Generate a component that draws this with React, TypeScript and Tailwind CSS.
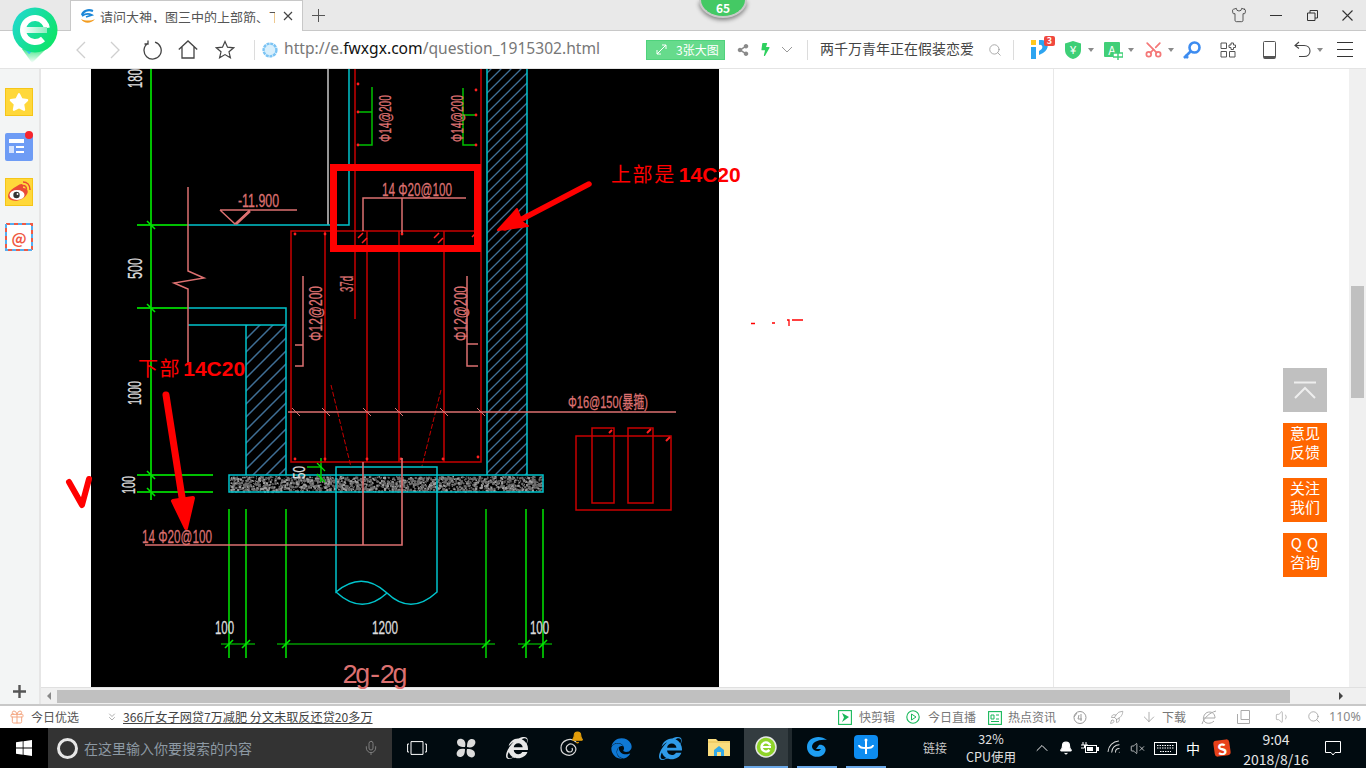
import React from "react";
import { Shirt, Rocket, Volume1, VolumeX, Bell, Scissors, Search, Mic, ChevronUp, Gift, ChevronsDown, ArrowDown, Wifi } from "lucide-react";
import { FaEdge, FaInternetExplorer, FaShareAlt, FaBolt, FaStar } from "react-icons/fa";

const GREEN = "#00c000";
const BRIGHT = "#00e600";
const CYAN = "#00c4cc";
const RED = "#c80000";
const PINK = "#dc7070";
const WHITE = "#dcdcdc";

function CadText({ x, y, w, size = 15, color = PINK, rotate, children }: { x: number; y: number; w: number; size?: number; color?: string; rotate?: boolean; children: React.ReactNode }) {
  return (
    <text
      x={x}
      y={y}
      fontSize={size}
      fill={color}
      stroke={color}
      strokeWidth={0.3}
      textLength={w}
      lengthAdjust="spacingAndGlyphs"
      transform={rotate ? `rotate(-90 ${x} ${y})` : undefined}
      fontFamily="'Liberation Sans','Noto Sans CJK SC',sans-serif"
    >
      {children}
    </text>
  );
}

function L({ p, c = RED, w = 1.5, dash }: { p: string; c?: string; w?: number; dash?: string }) {
  return <path d={p} stroke={c} strokeWidth={w} fill="none" strokeDasharray={dash} />;
}

const speckles: { x: number; y: number; w: number; c: string }[] = [];
let seed = 17;
for (let i = 0; i < 1800; i++) {
  seed = (seed * 1103515245 + 12345) & 0x7fffffff;
  const a = seed;
  seed = (seed * 1103515245 + 12345) & 0x7fffffff;
  const b = seed;
  speckles.push({ x: 230 + (a % 31200) / 100, y: 476 + (b % 1500) / 100, w: 1 + (a % 3) * 0.6, c: b % 3 === 0 ? "#a0a0a0" : "#6c6c6c" });
}

function Drawing() {
  const gTicks: [number, number, boolean][] = [
    [151, 225, true], [151, 308, true], [151, 475, true], [151, 492, true],
    [229, 644, false], [246, 644, false], [286, 644, false], [486, 644, false], [526, 644, false], [543, 644, false],
  ];
  return (
    <svg width="628" height="618" viewBox="91 69 628 618" className="block overflow-visible bg-black">
      <defs>
        <pattern id="h1" width="10" height="10" patternUnits="userSpaceOnUse">
          <path d="M-1 11 L11 -1 M-1 1 L1 -1 M9 11 L11 9" stroke="#3f6f96" strokeWidth="1.3" />
        </pattern>
        <pattern id="h2" width="13" height="13" patternUnits="userSpaceOnUse">
          <path d="M-1 14 L14 -1 M-1 1 L1 -1 M12 14 L14 12" stroke="#3f6f96" strokeWidth="1.5" />
        </pattern>
      </defs>

      {/* hatching */}
      <rect x="487" y="69" width="40" height="406" fill="url(#h1)" />
      <rect x="246" y="325" width="40" height="150" fill="url(#h2)" />

      {/* slab */}
      {speckles.map((s, i) => (
        <rect key={i} x={s.x} y={s.y} width={s.w} height={s.w} fill={s.c} />
      ))}
      <rect x="229" y="475" width="314" height="17" fill="none" stroke={CYAN} strokeWidth="1.5" />

      {/* green dim lines */}
      <L p="M151 69V500" c={GREEN} w={2} />
      <L p="M137 225H188M137 308H188M137 475H213M137 492H213" c={GREEN} w={1.8} />
      <L p="M229 509V658M246 509V658M286 509V658M526 509V658M543 509V658" c={GREEN} w={1.8} />
      <L p="M486 509V658" c={BRIGHT} w={1.4} />
      <L p="M221 644H255M277 644H495M518 644H552" c={BRIGHT} w={1.2} />
      {gTicks.map(([x, y, back], i) => (
        <L key={i} p={back ? `M${x - 4} ${y - 4}L${x + 4} ${y + 4}` : `M${x - 4} ${y + 4}L${x + 4} ${y - 4}`} c={BRIGHT} w={1.6} />
      ))}
      <L p="M321 458V482M307 467H321" c={GREEN} w={1.6} />
      <L p="M317 463L325 471M317 474L325 482" c={BRIGHT} w={1.2} />

      {/* green brackets */}
      <L p="M358 112H372M372 87V145H358" c={GREEN} />
      <L p="M476 115H463M463 88V145H476" c={GREEN} />

      {/* gray + cyan */}
      <L p="M328 69V225" c="#a8a8a8" w={1.8} />
      <L p="M188 225H349V69" c={CYAN} />
      <L p="M188 308H286V475M188 325H286M246 325V475" c={CYAN} />
      <L p="M487 69V475M527 69V475" c={CYAN} />
      <L p="M336 492V467H437V592Q411 616 387 593Q362 570 336 592V492M336 592Q362 616 387 593" c={CYAN} />

      {/* red rebar */}
      <L p="M355 69V319" c={RED} />
      <L p="M481 69V462H291V231H481" c={RED} />
      <L p="M325 231V462M367 231V462M399 231V462M444 231V462" c={RED} />
      <L p="M331 385L351 467M441 390L422 466" c={RED} w={1} dash="5 2" />
      {[[358, 84], [358, 112], [358, 145], [476, 90], [476, 115], [476, 145], [295, 234], [325, 234], [402, 234], [325, 459], [295, 459], [367, 459], [401, 459], [443, 459], [478, 457]].map(([x, y], i) => (
        <circle key={i} cx={x} cy={y} r="1.4" fill="#ff2020" />
      ))}
      <L p="M358 238L363 233M362 243L367 238M434 238L439 233M438 243L443 238M472 237L478 231" c="#ff2020" />

      {/* stirrups */}
      <L p="M576 436H671V510H576ZM592 428H614V503H592ZM628 428H653V503H628Z" c={RED} />
      <L p="M609 433L612 430M647 433L651 429M666 441L670 437" c="#ff2020" w={2} />

      {/* pink leaders */}
      <L p="M188 187V271L204 278L174 283L188 289V365" c={PINK} />
      <L p="M220 210H297M220 210L235 224L250 210" c={PINK} />
      <L p="M236 224L250 211" c={PINK} w={2.4} />
      <L p="M363 231V198H466M402 198V233" c={PINK} />
      <L p="M303 276V366H295M303 345H295" c={PINK} />
      <L p="M467 276V366H478M467 344H478" c={PINK} />
      <L p="M288 412H676" c={PINK} w={1.6} />
      <L p="M145 545H402V458M363 462V545" c={PINK} w={1.6} />
      {[296, 326, 367, 399, 444, 481].map((x) => (
        <L key={x} p={`M${x - 4} ${408}L${x + 4} ${416}`} c={PINK} w={1} />
      ))}

      {/* CAD notes */}
      <CadText x={142} y={88} w={19} size={20} color={WHITE} rotate>180</CadText>
      <CadText x={142} y={279} w={21} size={20} color={WHITE} rotate>500</CadText>
      <CadText x={141} y={405} w={24} size={18} color={WHITE} rotate>1000</CadText>
      <CadText x={135} y={494} w={18} size={19} color={WHITE} rotate>100</CadText>
      <CadText x={305} y={479} w={13} size={17} color={WHITE} rotate>50</CadText>
      <CadText x={238} y={207} w={41} size={19}>-11.900</CadText>
      <CadText x={391} y={142} w={47} size={17} rotate>Φ14@200</CadText>
      <CadText x={463} y={142} w={47} size={17} rotate>Φ14@200</CadText>
      <CadText x={322} y={341} w={55} size={19} rotate>Φ12@200</CadText>
      <CadText x={467} y={341} w={55} size={19} rotate>Φ12@200</CadText>
      <CadText x={353} y={292} w={16} size={18} rotate>37d</CadText>
      <CadText x={382} y={196} w={70} size={19}>14 Φ20@100</CadText>
      <CadText x={142} y={543} w={70} size={19}>14 Φ20@100</CadText>
      <CadText x={568} y={408} w={80} size={17}>Φ16@150(暴箍)</CadText>
      <CadText x={215} y={634} w={19} size={18} color={WHITE}>100</CadText>
      <CadText x={372} y={634} w={26} size={18} color={WHITE}>1200</CadText>
      <CadText x={530} y={634} w={19} size={18} color={WHITE}>100</CadText>
      <text x={342} y={683} fontSize={27} fill={PINK} textLength={66} lengthAdjust="spacing" fontFamily="'Liberation Mono',monospace">2g-2g</text>

      {/* highlight box */}
      <rect x="333.5" y="167.5" width="144" height="81" fill="none" stroke="#ff0000" strokeWidth="7" />

      {/* hand-drawn arrows */}
      <path d="M589 184L505 228" stroke="#ff0000" strokeWidth="5.5" strokeLinecap="round" />
      <path d="M498 230L517 209L522 222L528 226Z" fill="#ff0000" stroke="#ff0000" strokeWidth="2" strokeLinejoin="round" />
      <path d="M166 395L184 510" stroke="#ff0000" strokeWidth="7" strokeLinecap="round" />
      <path d="M186 528L173 501L193 498Z" fill="#ff0000" stroke="#ff0000" strokeWidth="4" strokeLinejoin="round" />
      <path d="M69 482L82 505L89 479" stroke="#ff0000" strokeWidth="6" strokeLinecap="round" strokeLinejoin="round" fill="none" />

      {/* clipped marks in the page text */}
      <path d="M751 323.5H755M772 323H775M787 320H789V326M792 320H803" stroke="#ff0000" strokeWidth="1.3" fill="none" />
    </svg>
  );
}

function Logo() {
  return (
    <svg width="50" height="60" viewBox="0 0 50 60" className="absolute left-[10px] top-[5px] z-10">
      <defs>
        <linearGradient id="lg" x1="0" y1="0" x2="1" y2="0.6">
          <stop offset="0" stopColor="#22d8d8" />
          <stop offset="1" stopColor="#0ee46a" />
        </linearGradient>
        <linearGradient id="lt" x1="0" y1="0" x2="0" y2="1">
          <stop offset="0" stopColor="#2be37a" />
          <stop offset="1" stopColor="#ffffff" />
        </linearGradient>
        <linearGradient id="lb" x1="0" y1="0" x2="1" y2="0">
          <stop offset="0" stopColor="#ffffff" />
          <stop offset="1" stopColor="#8cebc0" />
        </linearGradient>
      </defs>
      <path d="M12 44L22 58L38 42Z" fill="url(#lt)" />
      <path d="M9 38L19 49L25 44Z" fill="#38bdf8" />
      <circle cx="25" cy="25" r="22.5" fill="url(#lg)" />
      <circle cx="25" cy="25" r="12" fill="none" stroke="#fff" strokeWidth="6" strokeDasharray="63 12.4" transform="rotate(48 25 25)" />
      <rect x="13" y="22" width="24" height="6" fill="url(#lb)" />
    </svg>
  );
}

function Favicon() {
  return (
    <svg width="16" height="15" viewBox="0 0 16 15">
      <path d="M2 6C3 2 8 0 13 2" stroke="#1c87d8" strokeWidth="2.2" fill="none" />
      <path d="M2 7C6 4 10 5 12 6L6 8" stroke="#1c87d8" strokeWidth="1.6" fill="none" />
      <path d="M1 10C4 15 11 15 15 10C11 12 5 12 1 10Z" fill="#f39c1f" />
    </svg>
  );
}

function Arrow() {
  return <div className="h-0 w-0 border-x-[3.5px] border-t-[4px] border-x-transparent border-t-[#8a8a8a]" />;
}

function Toolbar() {
  return (
    <div className="flex h-[38px] items-center border-b border-[#e4e4e4] bg-white pl-[64px]">
      <div className="flex w-[34px] justify-center">
        <svg width="12" height="18" viewBox="0 0 12 18"><path d="M10 1L2 9L10 17" stroke="#cfcfcf" strokeWidth="1.3" fill="none" /></svg>
      </div>
      <div className="flex w-[34px] justify-center">
        <svg width="12" height="18" viewBox="0 0 12 18"><path d="M2 1L10 9L2 17" stroke="#cfcfcf" strokeWidth="1.3" fill="none" /></svg>
      </div>
      <div className="flex w-[40px] justify-center">
        <svg width="20" height="20" viewBox="0 0 20 20"><path d="M6 3.2A8.6 8.6 0 1 0 13 2.2M6 0.5V4H2.5" stroke="#444" strokeWidth="1.3" fill="none" /></svg>
      </div>
      <div className="flex w-[32px] justify-center">
        <svg width="20" height="19" viewBox="0 0 20 19"><path d="M0.8 9.5L10 1L19.2 9.5M4 7V18H16V7" stroke="#444" strokeWidth="1.3" fill="none" /></svg>
      </div>
      <div className="flex w-[42px] justify-center">
        <svg width="20" height="19" viewBox="0 0 20 19"><path d="M10 1.5L12.5 7.2L18.6 7.8L14 11.8L15.4 17.8L10 14.6L4.6 17.8L6 11.8L1.4 7.8L7.5 7.2Z" stroke="#444" strokeWidth="1.2" fill="none" /></svg>
      </div>
      <div className="ml-[8px] h-[20px] w-px bg-[#dcdcdc]" />
      <div className="flex w-[29px] justify-center">
        <svg width="16" height="16" viewBox="0 0 16 16">
          <circle cx="8" cy="8" r="6.4" fill="#d8effc" stroke="#7cc4f4" strokeWidth="2.4" strokeDasharray="3 0.7" />
        </svg>
      </div>
      <div className="mb-[2px] w-[362px] whitespace-nowrap font-['Noto_Sans','Liberation_Sans',sans-serif] text-[15.6px] leading-none text-[#777]">
        http://e.<span className="text-[#111]">fwxgx.com</span>/question_1915302.html
      </div>
      <div className="flex h-[20px] w-[79px] items-center gap-[9px] border border-[#4fd27c] bg-[#66db8c] pl-[9px] text-[12px] text-white">
        <svg width="11" height="11" viewBox="0 0 11 11"><path d="M1 10L10 1M6 1H10V5M1 6V10H5" stroke="#fff" strokeWidth="1" fill="none" /></svg>
        <span>3张大图</span>
      </div>
      <div className="ml-[8px] flex w-[20px] justify-center"><FaShareAlt size={12} color="#8a8a8a" /></div>
      <div className="ml-[2px] flex w-[20px] justify-center"><FaBolt size={13} color="#2fd05f" /></div>
      <div className="ml-[2px] flex w-[20px] justify-center">
        <svg width="12" height="7" viewBox="0 0 12 7"><path d="M1 1L6 6L11 1" stroke="#999" strokeWidth="1" fill="none" /></svg>
      </div>
      <div className="ml-[10px] h-[20px] w-px bg-[#dcdcdc]" />
      <div className="mb-[3px] ml-[12px] w-[165px] whitespace-nowrap text-[14px] leading-none text-[#444]">两千万青年正在假装恋爱</div>
      <div className="flex w-[20px] justify-center"><Search size={14} color="#999" strokeWidth={1.4} /></div>
      <div className="ml-[8px] h-[20px] w-px bg-[#dcdcdc]" />
      <div className="relative ml-[14px] flex h-[24px] w-[24px] justify-center">
        <svg width="24" height="24" viewBox="0 0 24 24">
          <rect x="3" y="2" width="5" height="5" fill="#ffc81e" />
          <rect x="3" y="9" width="5" height="12" fill="#2da4f0" />
          <path d="M11 2H14C21 2 22 11 15 15L11 17V13C16 11 15 6 11 7Z" fill="#2da4f0" />
        </svg>
        <span className="absolute right-[-3px] top-[-2px] rounded-[2px] bg-[#f0483e] px-[3px] text-[9px] font-bold leading-[10px] text-white">3</span>
      </div>
      <div className="ml-[10px] flex w-[22px] justify-center">
        <svg width="18" height="20" viewBox="0 0 18 20">
          <path d="M9 1L17 3.5V10C17 15 13 18 9 19C5 18 1 15 1 10V3.5Z" fill="#3dcf76" />
          <text x="9" y="14" fontSize="11" textAnchor="middle" fill="#fff" fontFamily="'Liberation Sans',sans-serif">¥</text>
        </svg>
      </div>
      <div className="ml-[3px] flex w-[7px] justify-center"><Arrow /></div>
      <div className="relative ml-[7px] flex h-[20px] w-[24px] items-center pl-[3px]">
        <div className="flex h-[15px] w-[16px] items-center justify-center rounded-[1px] bg-[#41cf78] text-[12px] leading-none text-white">A</div>
        <svg width="10" height="10" viewBox="0 0 10 10" className="absolute bottom-0 right-[2px]"><path d="M0 3H10V7H0ZM5 0V10" stroke="#41cf78" strokeWidth="1.5" fill="#fff" /></svg>
      </div>
      <div className="ml-[2px] flex w-[7px] justify-center"><Arrow /></div>
      <div className="ml-[7px] flex w-[24px] justify-center"><Scissors size={19} color="#f47878" strokeWidth={2.2} className="-rotate-90" /></div>
      <div className="ml-[2px] flex w-[7px] justify-center"><Arrow /></div>
      <div className="ml-[6px] flex w-[24px] justify-center">
        <svg width="20" height="20" viewBox="0 0 20 20"><circle cx="12.5" cy="7.5" r="5" stroke="#3d8cf0" strokeWidth="2.6" fill="none" /><path d="M8.5 11.5L2 18M3 15L6 18" stroke="#3d8cf0" strokeWidth="2.6" fill="none" /></svg>
      </div>
      <div className="ml-[12px] flex w-[24px] justify-center">
        <svg width="16" height="16" viewBox="0 0 16 16"><path d="M1 1H6.5V6.5H1ZM1 9.5H6.5V15H1ZM9.5 9.5H15V15H9.5ZM11 1H13.5V3H15.5V5.5H13.5V7.5H11V5.5H9V3H11Z" stroke="#555" strokeWidth="1" fill="none" /></svg>
      </div>
      <div className="ml-[17px] flex w-[24px] justify-center">
        <svg width="13" height="18" viewBox="0 0 13 18"><rect x="0.5" y="0.5" width="12" height="17" rx="1" stroke="#555" strokeWidth="1" fill="none" /><rect x="1" y="15" width="11" height="2.5" fill="#555" /></svg>
      </div>
      <div className="ml-[9px] flex w-[24px] justify-center">
        <svg width="17" height="17" viewBox="0 0 17 17"><path d="M5 1L1 4.5L5 7.5M1 4.5H10C18 4.5 18 15.5 10 15.5H5" stroke="#444" strokeWidth="1.1" fill="none" /></svg>
      </div>
      <div className="ml-[2px] flex w-[7px] justify-center"><Arrow /></div>
      <div className="ml-[10px] flex w-[24px] flex-col items-center gap-[6px]">
        <div className="h-px w-[16px] bg-[#333]" />
        <div className="h-px w-[16px] bg-[#333]" />
        <div className="h-px w-[16px] bg-[#333]" />
      </div>
    </div>
  );
}

function TitleStrip() {
  return (
    <div className="relative flex h-[31px] border-b border-[#c8c8c8] bg-[#e9e9e9] pl-[70px]">
      <div className="flex h-[31px] w-[233px] items-center border-x border-t border-[#c8c8c8] bg-white pl-[9px]">
        <Favicon />
        <div className="ml-[4px] w-[175px] overflow-hidden whitespace-nowrap text-[13px] leading-none text-[#555]">请问大神，图三中的上部筋、下</div>
        <svg width="10" height="10" viewBox="0 0 10 10" className="ml-[8px]"><path d="M1 1L9 9M9 1L1 9" stroke="#444" strokeWidth="1.2" /></svg>
      </div>
      <div className="flex w-[30px] items-center justify-center">
        <svg width="13" height="13" viewBox="0 0 13 13"><path d="M6.5 0V13M0 6.5H13" stroke="#555" strokeWidth="1" /></svg>
      </div>
      <div className="flex-1" />
      <div className="flex w-[37px] items-center justify-center"><Shirt size={16} color="#333" strokeWidth={1.2} /></div>
      <div className="flex w-[37px] items-center justify-center"><div className="h-px w-[12px] bg-[#333]" /></div>
      <div className="flex w-[36px] items-center justify-center">
        <svg width="11" height="11" viewBox="0 0 11 11"><path d="M0.5 3H8V10.5H0.5ZM3 3V0.5H10.5V8H8" stroke="#333" strokeWidth="1" fill="none" /></svg>
      </div>
      <div className="flex w-[36px] items-center justify-center pr-[2px]">
        <svg width="11" height="11" viewBox="0 0 11 11"><path d="M0.5 0.5L10.5 10.5M10.5 0.5L0.5 10.5" stroke="#333" strokeWidth="1.1" /></svg>
      </div>
      <div className="absolute left-[699px] top-0 flex h-[18px] w-[48px] items-end justify-center rounded-bl-[24px_18px] rounded-br-[24px_18px] border-x-2 border-b-2 border-[#c9c9c9] bg-[#44c964] pb-[1px] text-[12px] font-bold leading-[14px] text-white shadow-[0_2px_4px_rgba(0,0,0,0.45)]">65</div>
    </div>
  );
}

function Sidebar() {
  return (
    <div className="flex w-[41px] flex-col justify-between border-r-2 border-[#e6e6e6] bg-[#f3f5f5] pt-[19px]">
      <div className="flex flex-col items-center gap-[17px] pr-[1px]">
        <div className="flex h-[28px] w-[28px] items-center justify-center border border-[#f5c518] bg-[#ffd83a]"><FaStar size={20} color="#fff" /></div>
        <div className="relative h-[28px] w-[28px] rounded-[2px] bg-[#6e9cf5]">
          <div className="absolute left-[4px] top-[6px] h-[4px] w-[15px] bg-white" />
          <div className="absolute left-[4px] top-[13px] h-[7px] w-[5px] bg-[#d4e2fd]" />
          <div className="absolute left-[11px] top-[13px] h-[2px] w-[8px] bg-white" />
          <div className="absolute left-[11px] top-[18px] h-[2px] w-[8px] bg-white" />
          <div className="absolute right-0 top-[-2px] h-[8px] w-[8px] rounded-full bg-[#f8242c]" />
        </div>
        <div className="flex h-[28px] w-[28px] items-center justify-center border border-[#f5c518] bg-[#ffd83a]">
          <svg width="26" height="24" viewBox="0 0 26 24">
            <path d="M11 6C15 3 18 3 17 8C21 8 23 11 21 14C18 20 10 22 5 20C0 18 1 11 11 6Z" fill="#ea4b35" />
            <ellipse cx="11" cy="15" rx="7.5" ry="5" fill="#fff" />
            <circle cx="10.5" cy="15" r="3.2" fill="#333" />
            <circle cx="11.5" cy="14" r="0.9" fill="#fff" />
            <path d="M17 2C21 2 24 5 24 10M17 5.5C19 5.5 20.5 7 20.5 9.5" stroke="#ea4b35" strokeWidth="1.5" fill="none" />
          </svg>
        </div>
        <div className="relative flex h-[28px] w-[28px] items-center justify-center bg-white text-[15px] font-bold leading-none text-[#ef5a45]">
          <svg width="28" height="28" viewBox="0 0 28 28" className="absolute inset-0">
            <rect x="1" y="1" width="26" height="26" fill="none" stroke="#ef5a45" strokeWidth="2" strokeDasharray="4 4" />
            <rect x="1" y="1" width="26" height="26" fill="none" stroke="#54aef0" strokeWidth="2" strokeDasharray="4 4" strokeDashoffset="4" />
          </svg>
          <span className="relative">@</span>
        </div>
      </div>
      <div className="flex h-[26px] items-center justify-center">
        <svg width="13" height="13" viewBox="0 0 13 13"><path d="M6.5 0V13M0 6.5H13" stroke="#555" strokeWidth="2.4" /></svg>
      </div>
    </div>
  );
}

function FloatBtn({ children }: { children: React.ReactNode }) {
  return <div className="flex h-[44px] w-[44px] flex-col items-center justify-center bg-[#ff6600] pb-[6px] text-[15px] leading-[19px] text-white">{children}</div>;
}

function Page() {
  return (
    <div className="flex h-[618px]">
      <div className="relative flex-1 bg-white">
        <div className="h-full w-[1013px] border-r border-[#e8e8e8] pl-[50px]">
          <Drawing />
        </div>
        <div className="absolute left-[570px] top-[95px] flex items-baseline whitespace-nowrap font-bold leading-none text-[#ff0000]">
          <span className="mr-[3px] font-normal text-[20px] tracking-[1.6px]">上部是</span>
          <span className="font-['Liberation_Sans',sans-serif] text-[21px]">14C20</span>
        </div>
        <div className="absolute left-[97px] top-[289px] flex items-baseline whitespace-nowrap font-bold leading-none text-[#ff0000]">
          <span className="mr-[2px] font-normal text-[20px] tracking-[1.6px]">下部</span>
          <span className="font-['Liberation_Sans',sans-serif] text-[21px]">14C20</span>
        </div>
        <div className="absolute left-[1242px] top-[299px] flex flex-col gap-[11px]">
          <div className="flex h-[44px] w-[44px] items-center justify-center bg-[#c0c0c0]">
            <svg width="24" height="18" viewBox="0 0 24 18"><path d="M1 1.5H23M2 17L12 7L22 17" stroke="#eee" strokeWidth="2" fill="none" /></svg>
          </div>
          <FloatBtn><span>意见</span><span>反馈</span></FloatBtn>
          <FloatBtn><span>关注</span><span>我们</span></FloatBtn>
          <FloatBtn><span className="pl-[4px] text-[15px] tracking-[5px]">QQ</span><span>咨询</span></FloatBtn>
        </div>
      </div>
      <div className="w-[17px] bg-[#f0f0f0] pl-[2px] pt-[217px]">
        <div className="h-[112px] w-[13px] bg-[#c0c0c0]" />
      </div>
    </div>
  );
}

function HScroll() {
  return (
    <div className="flex h-[17px] items-center border-t border-[#e0e0e0] bg-[#f0f0f0]">
      <div className="flex w-[16px] justify-center">
        <div className="h-0 w-0 border-y-[4px] border-r-[4px] border-y-transparent border-r-[#888]" />
      </div>
      <div className="h-[13px] w-[1233px] bg-[#c0c0c0]" />
      <div className="ml-[49px] h-0 w-0 border-y-[4px] border-l-[4px] border-y-transparent border-l-[#444]" />
    </div>
  );
}

function StatusBar() {
  return (
    <div className="flex h-[24px] items-center border-t-2 border-[#c8c8c8] bg-white text-[12px] leading-none text-[#777]">
      <div className="ml-[8px] flex w-[18px] justify-center"><Gift size={16} color="#f4a681" strokeWidth={1.5} /></div>
      <span className="ml-[5px] w-[48px] whitespace-nowrap text-[#555]">今日优选</span>
      <div className="ml-[25px] flex w-[16px] justify-center"><ChevronsDown size={12} color="#777" strokeWidth={1.2} /></div>
      <span className="ml-[3px] w-[250px] whitespace-nowrap text-[12.15px] text-[#444] underline">366斤女子网贷7万减肥 分文未取反还贷20多万</span>
      <div className="flex-1" />
      <div className="flex w-[528px] items-center">
        <svg width="14" height="15" viewBox="0 0 14 15" className="w-[14px]"><rect x="0.6" y="0.6" width="12.8" height="13.8" fill="none" stroke="#18b85a" strokeWidth="1.1" /><path d="M4 3L11 7L4 12L6 7.5Z" fill="#18b85a" /></svg>
        <span className="ml-[7px] w-[36px] whitespace-nowrap">快剪辑</span>
        <svg width="14" height="14" viewBox="0 0 14 14" className="ml-[11px] w-[14px]"><circle cx="7" cy="7" r="6.2" fill="none" stroke="#18b85a" strokeWidth="1.1" /><path d="M5.5 4L10 7L5.5 10Z" fill="none" stroke="#18b85a" /></svg>
        <span className="ml-[8px] w-[48px] whitespace-nowrap">今日直播</span>
        <svg width="14" height="15" viewBox="0 0 14 15" className="ml-[12px] w-[14px]"><rect x="0.6" y="1.6" width="12.8" height="12.8" fill="none" stroke="#18b85a" strokeWidth="1.1" /><path d="M3 5H6V9H3ZM8 5H11M8 9H11M3 11.5H11" stroke="#18b85a" fill="none" /></svg>
        <span className="ml-[6px] w-[48px] whitespace-nowrap">热点资讯</span>
        <svg width="16" height="15" viewBox="0 0 16 15" className="ml-[16px] w-[16px]"><circle cx="8" cy="7.5" r="6" fill="none" stroke="#999" /><path d="M2 7L5 3M7 5L6 9H10M9 4V11" stroke="#999" fill="none" /></svg>
        <div className="ml-[21px] w-[16px]"><Rocket size={15} color="#999" strokeWidth={1.2} /></div>
        <div className="ml-[16px] w-[16px]"><ArrowDown size={16} color="#999" strokeWidth={1.2} /></div>
        <span className="ml-[5px] w-[24px] whitespace-nowrap">下载</span>
        <svg width="16" height="15" viewBox="0 0 16 15" className="ml-[15px] w-[16px]"><path d="M2 8H14C14 3 10 1 6 2.5C3 4 1.5 8 3 11C5 14 10 14 13 11M1 14C3 8 8 3 15 1" stroke="#aaa" fill="none" /></svg>
        <svg width="16" height="14" viewBox="0 0 16 14" className="ml-[20px] w-[16px]"><path d="M4 0.5H12.5V9.5M0.5 4V13.5H12.5V9.5H4V0.5" stroke="#aaa" fill="none" /></svg>
        <div className="ml-[22px] w-[16px]"><Volume1 size={16} color="#aaa" strokeWidth={1.2} /></div>
        <div className="ml-[16px] w-[16px]"><Search size={14} color="#999" strokeWidth={1.3} /></div>
        <span className="ml-[6px] whitespace-nowrap font-['Noto_Sans',sans-serif] text-[12.5px] text-[#888]">110%</span>
      </div>
    </div>
  );
}

function Slot({ className, children }: { className: string; children: React.ReactNode }) {
  return <div className={`flex h-full items-center justify-center ${className}`}>{children}</div>;
}

function Taskbar() {
  return (
    <div className="flex h-[40px] bg-[#010b10] text-white">
      <Slot className="w-[48px] bg-black">
        <svg width="16" height="16" viewBox="0 0 16 16"><path d="M0 2.3L6.7 1.3V7.6H0ZM7.5 1.2L16 0V7.6H7.5ZM0 8.4H6.7V14.7L0 13.7ZM7.5 8.4H16V16L7.5 14.8Z" fill="#fff" /></svg>
      </Slot>
      <div className="flex h-full w-[344px] items-center bg-[#333333] pl-[9px] pr-[13px]">
        <div className="h-[21px] w-[21px] rounded-full border-[3px] border-[#e6e6e6]" />
        <span className="ml-[6px] whitespace-nowrap text-[14px] leading-none text-[#8d99a3]">在这里输入你要搜索的内容</span>
        <div className="ml-auto"><Mic size={16} color="#888" strokeWidth={1.3} /></div>
      </div>
      <Slot className="w-[49px]">
        <svg width="20" height="14" viewBox="0 0 20 14"><path d="M4 0.6H16V13.4H4ZM2 3H0.6V11H2M18 3H19.4V11H18" stroke="#fff" fill="none" /></svg>
      </Slot>
      <Slot className="w-[50px]">
        <svg width="20" height="20" viewBox="0 0 20 20" fill="#dcdcdc"><path d="M9 9C3 9 1 7 1 4C1 1 4 0 6 1C9 2 10 5 9 9ZM11 9C11 3 13 1 16 1C19 1 20 4 19 6C18 9 15 10 11 9ZM11 11C17 11 19 13 19 16C19 19 16 20 14 19C11 18 10 15 11 11ZM9 11C9 17 7 19 4 19C1 19 0 16 1 14C2 11 5 10 9 11Z" /></svg>
      </Slot>
      <Slot className="w-[52px]"><FaInternetExplorer size={22} color="#e8e8e8" /></Slot>
      <Slot className="relative w-[51px]">
        <svg width="20" height="20" viewBox="0 0 20 20"><path d="M17 4C12 -1 2 2 2 10C2 17 12 20 16 14C19 9 13 4 9 7C6 9 7 14 11 14C13 14 14 12 13 10" stroke="#d8d8d8" strokeWidth="1.2" fill="none" /></svg>
        <Bell size={13} color="#e09c0a" fill="#e09c0a" className="absolute left-[28px] top-[3px]" />
      </Slot>
      <Slot className="ml-[2px] w-[50px]"><FaEdge size={21} color="#0f78d4" /></Slot>
      <Slot className="w-[48px]"><FaInternetExplorer size={23} color="#2f9be8" /></Slot>
      <Slot className="w-[50px]">
        <svg width="22" height="20" viewBox="0 0 22 20"><path d="M0 1H8L10 3H22V18H0Z" fill="#fbdd7e" /><path d="M0 4H22" stroke="#e8bf52" /><path d="M6 18V12L11 8L16 12V18Z" fill="#33a9e8" /><rect x="9" y="14" width="4" height="4" fill="#fbdd7e" /></svg>
      </Slot>
      <Slot className="w-[44px] border-b-2 border-[#6aa8e8] bg-[#333c40]">
        <svg width="22" height="24" viewBox="0 0 22 24">
          <circle cx="11" cy="12" r="10" fill="#8fd32a" stroke="#e6e6e6" strokeWidth="1.5" />
          <circle cx="11" cy="12" r="4.5" fill="none" stroke="#fff" strokeWidth="2.4" strokeDasharray="23 5.3" transform="rotate(40 11 12)" />
          <path d="M6 12H16" stroke="#fff" strokeWidth="2" />
        </svg>
      </Slot>
      <div className="h-full w-[9px]"><div className="h-full w-[4px] bg-[#20292d]" /></div>
      <Slot className="w-[40px] border-b-2 border-[#6aa8e8]">
        <svg width="24" height="24" viewBox="0 0 24 24"><path d="M22 5C15 -1 2 2 2 12C2 21 13 25 19 19C23 14 19 9 14 10L11 14H16C15 17 8 17 7 12C7 7 14 4 22 5Z" fill="#1e9ef2" /></svg>
      </Slot>
      <div className="w-[9px]" />
      <Slot className="w-[40px] border-b-2 border-[#6aa8e8]">
        <svg width="24" height="24" viewBox="0 0 24 24"><rect width="24" height="24" rx="4" fill="#0d8cf0" /><path d="M12 5V19M5 10C5 13 8 13 12 13C16 13 19 13 19 10" stroke="#fff" strokeWidth="2" fill="none" /><circle cx="12" cy="5" r="1.5" fill="#fff" /></svg>
      </Slot>
      <span className="ml-[37px] flex w-[24px] items-center whitespace-nowrap text-[12px] leading-none text-[#c8c8c8]">链接</span>
      <div className="ml-[14px] flex w-[60px] flex-col items-center justify-center text-[12.5px] leading-[18px] text-[#e0e0e0]">
        <span>32%</span>
        <span className="whitespace-nowrap">CPU使用</span>
      </div>
      <Slot className="ml-[11px] w-[20px]"><ChevronUp size={20} color="#eee" strokeWidth={1.2} /></Slot>
      <Slot className="ml-[6px] w-[16px]"><Bell size={14} color="#fff" fill="#fff" /></Slot>
      <Slot className="ml-[6px] w-[20px]">
        <svg width="18" height="12" viewBox="0 0 18 12"><path d="M2 0V3M5 0V3M0 3H7M3.5 3V6H0" stroke="#fff" fill="none" /><rect x="4.5" y="3.5" width="11" height="7" stroke="#fff" fill="none" /><rect x="6" y="5" width="6" height="4" fill="#fff" /><rect x="16" y="5" width="2" height="4" fill="#fff" /></svg>
      </Slot>
      <Slot className="ml-[6px] w-[18px]"><Wifi size={18} color="#ddd" strokeWidth={1.3} className="-rotate-45" /></Slot>
      <Slot className="ml-[4px] w-[18px]"><VolumeX size={15} color="#eee" strokeWidth={1.2} /></Slot>
      <Slot className="ml-[8px] w-[23px]">
        <svg width="23" height="13" viewBox="0 0 23 13"><rect x="0.5" y="0.5" width="22" height="12" fill="none" stroke="#fff" /><path d="M3 3.5H20M3 6H20M6 9.5H17" stroke="#fff" strokeDasharray="1.5 1" /></svg>
      </Slot>
      <Slot className="ml-[8px] w-[16px]"><span className="text-[14px] leading-none text-white">中</span></Slot>
      <Slot className="ml-[10px] w-[22px]">
        <div className="flex h-[16px] w-[16px] rotate-[-8deg] items-center justify-center rounded-[3px] bg-[#e8411a] text-[15px] font-bold leading-none text-white">S</div>
      </Slot>
      <div className="ml-[8px] flex w-[70px] flex-col items-center justify-center pt-[1px] text-[14px] leading-[20px] text-[#e6e6e6]">
        <span>9:04</span>
        <span className="whitespace-nowrap">2018/8/16</span>
      </div>
      <Slot className="ml-[11px] w-[22px]">
        <svg width="16" height="15" viewBox="0 0 16 15"><path d="M0.5 0.5H15.5V11.5H10L8 14L6 11.5H0.5Z" stroke="#fff" fill="none" /></svg>
      </Slot>
    </div>
  );
}

export default function App() {
  return (
    <div className="flex h-[768px] w-[1366px] flex-col overflow-hidden bg-white font-['Noto_Sans_CJK_SC','Liberation_Sans',sans-serif]">
      <div className="relative">
        <TitleStrip />
        <Toolbar />
        <Logo />
      </div>
      <div className="flex">
        <Sidebar />
        <div className="flex-1">
          <Page />
          <HScroll />
        </div>
      </div>
      <StatusBar />
      <Taskbar />
    </div>
  );
}
